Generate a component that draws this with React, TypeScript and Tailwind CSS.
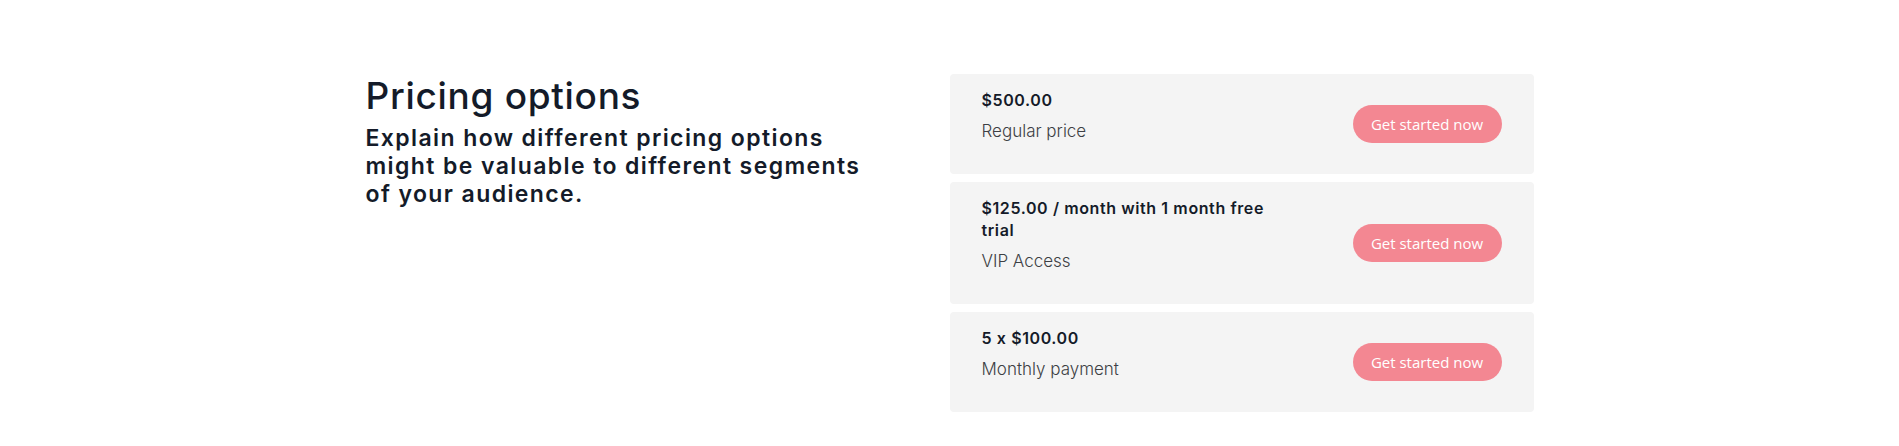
import React from "react";

const items = [
  { price: "$500.00", label: "Regular price" },
  { price: "$125.00 / month with 1 month free trial", label: "VIP Access" },
  { price: "5 x $100.00", label: "Monthly payment" },
];

export default function App() {
  return (
    <div className="w-full min-h-[446px] bg-white pt-[74px] pb-[35px]" style={{ fontFamily: "Inter, 'Noto Sans', sans-serif" }}>
      <div className="mx-auto w-[1168px] grid grid-cols-2">
        <div className="pr-[80px]">
          <h2 className="text-[37px] leading-[44px] font-medium text-[#141b29] tracking-[0.7px]">Pricing options</h2>
          <p className="mt-[6px] text-[23px] leading-[28px] font-semibold text-[#141b29] tracking-[1.4px]">
            Explain how different pricing options might be valuable to different segments of your audience.
          </p>
        </div>
        <div className="flex flex-col gap-[8px]">
          {items.map((p) => (
            <div key={p.label} className="flex items-center justify-between bg-[#f4f4f4] rounded-[4px] pl-8 pr-8 pt-[15px] pb-[31px]">
              <div className="max-w-[300px]">
                <div className="text-[16px] leading-[22px] font-semibold text-[#141b29] tracking-[0.6px]">{p.price}</div>
                <div className="mt-[8px] text-[17px] leading-[24px] font-light text-[#3d3f44]">{p.label}</div>
              </div>
              <button
                className="h-[38px] w-[149px] rounded-full bg-[#f38792] text-white text-[15px] mt-[16px]"
                style={{ fontFamily: "'Open Sans', sans-serif" }}
              >
                Get started now
              </button>
            </div>
          ))}
        </div>
      </div>
    </div>
  );
}
